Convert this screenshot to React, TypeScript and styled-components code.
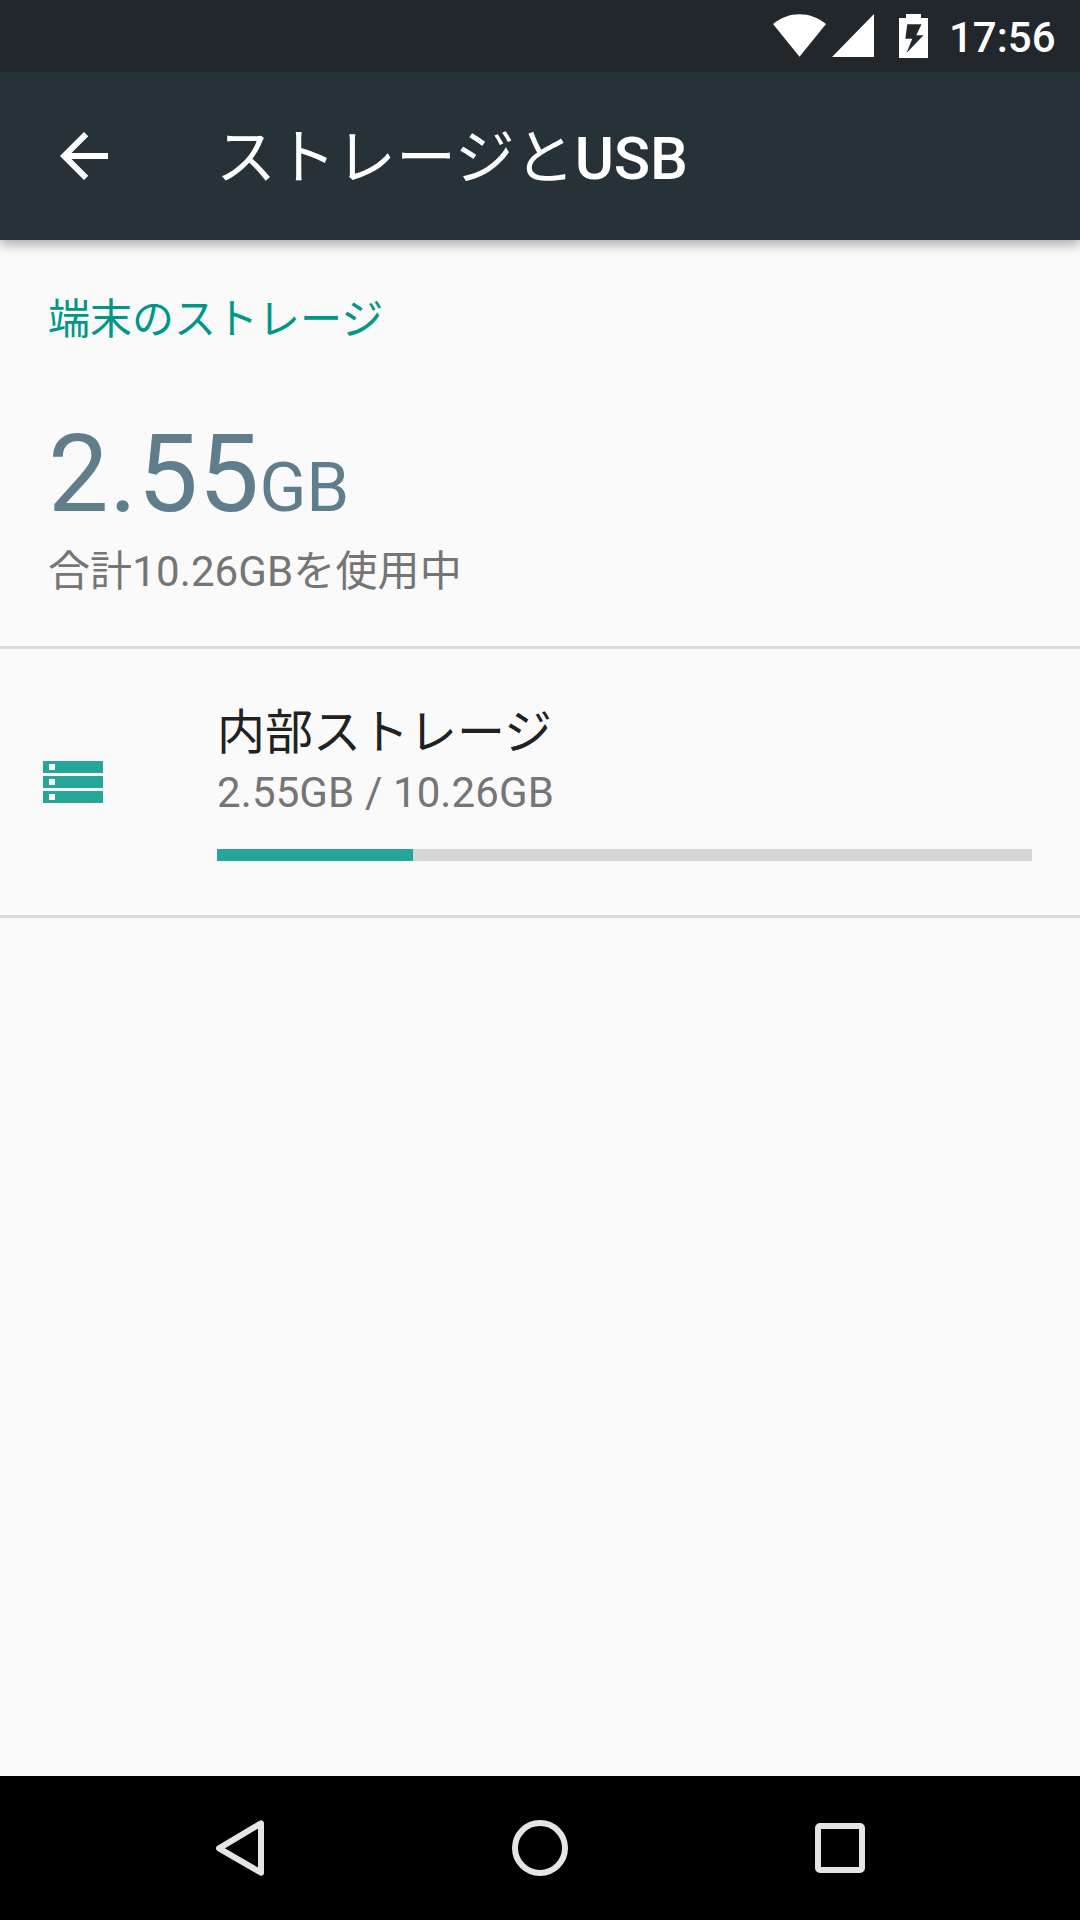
import React from "react";
import styled, { createGlobalStyle } from "styled-components";

const Global = createGlobalStyle`
  *{box-sizing:border-box}
  body{margin:0;background:#fafafa;font-family:Roboto,"Noto Sans CJK JP",sans-serif}
`;
const Screen = styled.div`width:1080px;height:1920px;display:flex;flex-direction:column;background:#fafafa;overflow:hidden;`;
const StatusBar = styled.div`height:72px;flex:none;background:#21272b;color:#fff;display:flex;justify-content:flex-end;align-items:center;`;
const StatusIcons = styled.svg`display:block;flex:none;width:176px;height:72px;`;
const Clock = styled.div`width:131px;font-size:42px;font-weight:500;line-height:72px;padding-top:4px;`;
const Toolbar = styled.header`height:168px;flex:none;background:#263238;color:#fff;display:flex;align-items:center;box-shadow:0 4px 12px rgba(0,0,0,.35);clip-path:inset(0 0 -30px 0);`;
const BackIcon = styled.svg`display:block;width:72px;height:72px;margin-left:48px;`;
const Title = styled.h1`margin:0 0 0 96px;padding-top:6px;font-size:60px;font-weight:500;line-height:80px;letter-spacing:-0.2px;`;
const Cjk = styled.span`font-weight:400;letter-spacing:0;`;
const Content = styled.main`flex:1;`;
const Category = styled.h2`margin:0;padding:52px 48px 0;color:#009688;font-size:42px;font-weight:400;line-height:56px;`;
const Summary = styled.section`height:301px;padding:57px 48px 0;border-bottom:3px solid #dadada;`;
const Total = styled.div`color:#607d8b;font-size:108px;line-height:139px;letter-spacing:0.2px;`;
const Unit = styled.span`font-size:69px;line-height:1;letter-spacing:0;`;
const Caption = styled.div`color:#757575;font-size:42px;line-height:56px;letter-spacing:0.12px;`;
const Volume = styled.section`height:269px;display:flex;border-bottom:3px solid #dadada;`;
const VolumeIcon = styled.svg`display:block;flex:none;width:60px;height:42px;margin:112px 0 0 43px;`;
const VolumeBody = styled.div`margin:51px 48px 0 114px;flex:1;`;
const VolumeName = styled.div`color:#212121;font-size:48px;line-height:65px;`;
const Track = styled.div`height:12px;background:#d6d6d6;margin-top:28px;`;
const Fill = styled.div`height:12px;background:#26a69a;`;
const NavBar = styled.nav`height:144px;flex:none;background:#000;display:flex;justify-content:center;`;
const NavIcon = styled.svg`display:block;width:300px;height:144px;fill:none;stroke:#e5e5e5;stroke-width:6px;`;

const used = 24.05;

export default function App() {
  return (
    <Screen>
      <Global />
      <StatusBar>
        <StatusIcons viewBox="0 0 176 72" fill="#fff">
          <path d="M0 24C16 11 37 11 53 24L26.500 56.700Z" />
          <path d="M101 14V57H59Z" />
          <path fillRule="evenodd" d="M126 18H133V14H148V18H155V58H126ZM134.300 24.300L132.300 38.700H139.300L133.500 52.900L150.500 35.300H143.300L148.500 24.300Z" />
        </StatusIcons>
        <Clock>17:56</Clock>
      </StatusBar>
      <Toolbar>
        <BackIcon viewBox="0 0 24 24" fill="#fff"><path d="M20 11H7.830l5.590-5.590L12 4l-8 8 8 8 1.410-1.410L7.830 13H20z" /></BackIcon>
        <Title><Cjk>ストレージと</Cjk>USB</Title>
      </Toolbar>
      <Content>
        <Category>端末のストレージ</Category>
        <Summary>
          <Total>2.55<Unit>GB</Unit></Total>
          <Caption>合計10.26GBを使用中</Caption>
        </Summary>
        <Volume>
          <VolumeIcon viewBox="0 0 60 42" fill="#26a69a">
            <path fillRule="evenodd" d="M0 0H60V12H0ZM6 3V9H12V3ZM0 15H60V27H0ZM6 18V24H12V18ZM0 30H60V42H0ZM6 33V39H12V33Z" />
          </VolumeIcon>
          <VolumeBody>
            <VolumeName>内部ストレージ</VolumeName>
            <Caption>2.55GB / 10.26GB</Caption>
            <Track><Fill style={{ width: `${used}%` }} /></Track>
          </VolumeBody>
        </Volume>
      </Content>
      <NavBar>
        <NavIcon viewBox="0 0 300 144"><path d="M171 47.300V96.700L129 72.300Z" strokeLinejoin="round" /></NavIcon>
        <NavIcon viewBox="0 0 300 144"><circle cx="150" cy="72" r="25" /></NavIcon>
        <NavIcon viewBox="0 0 300 144"><rect x="128" y="50" width="44" height="44" rx="2" /></NavIcon>
      </NavBar>
    </Screen>
  );
}
